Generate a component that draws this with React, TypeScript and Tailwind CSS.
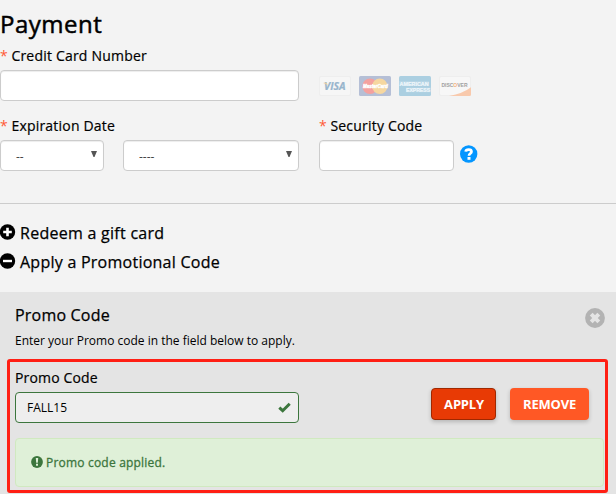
import { useState } from "react";

interface FieldLabelProps {
  htmlFor: string;
  children: string;
}

function FieldLabel({ htmlFor, children }: FieldLabelProps) {
  return (
    <label htmlFor={htmlFor} className="flex h-5 items-center gap-[3.5px] whitespace-nowrap text-[14px] leading-5 tracking-[0.2px] text-black">
      <span className="text-[#ff5a36]">*</span>
      <span className="[-webkit-text-stroke:0.2px_#000]">{children}</span>
    </label>
  );
}

function CircleIcon({ minus }: { minus?: boolean }) {
  return (
    <svg viewBox="0 0 16 16" className="mb-[2px] h-4 w-4 shrink-0" aria-hidden="true">
      <circle cx="7.5" cy="8" r="7.7" fill="#000" />
      <path d={minus ? "M3 6.8h9v2.4H3z" : "M6.2 3.7h2.6v3h3v2.6h-3v3H6.2v-3h-3V6.7h3z"} fill="#fff" />
    </svg>
  );
}

function CardLogos() {
  return (
    <div className="flex gap-2">
      <svg viewBox="0 0 32 20" className="h-5 w-8 overflow-visible" role="img" aria-label="Visa">
        <rect x="0.5" y="0.5" width="31" height="19" rx="1.5" fill="#f6f6f6" stroke="#eeeeee" />
        <text x="5" y="14" fontFamily="Open Sans, sans-serif" fontSize="10.4" fontWeight="700" fontStyle="italic" fill="#98b5cd" stroke="#98b5cd" strokeWidth="0.2">VISA</text>
        <path d="M4.5 6.8h3.2l1.2 3.2C7.8 8.4 6.4 7.6 4.5 7.3z" fill="#efd19c" />
      </svg>
      <svg viewBox="0 0 32 20" className="h-5 w-8 overflow-visible" role="img" aria-label="MasterCard">
        <rect width="32" height="20" rx="1.5" fill="#b5bfd6" />
        <circle cx="11" cy="10.3" r="7.7" fill="#f4a19f" />
        <circle cx="20.8" cy="10.3" r="7.7" fill="#f6d7a0" />
        <text x="4" y="12" fontFamily="Liberation Sans, sans-serif" fontSize="4.5" fontWeight="700" fontStyle="italic" fill="#fff" stroke="#fff" strokeWidth="0.4">MasterCard</text>
      </svg>
      <svg viewBox="0 0 32 20" className="h-5 w-8 overflow-visible" role="img" aria-label="American Express">
        <rect width="32" height="20" rx="1.5" fill="#abcfe1" />
        <path d="M0 5h30v5H0zM7 11.5h25v4.7H7z" fill="#b6d5e5" />
        <text x="0.6" y="9.6" fontFamily="Liberation Sans, sans-serif" fontSize="5.4" fontWeight="700" fill="#f0f7fb" stroke="#f0f7fb" strokeWidth="0.2">AMERICAN</text>
        <text x="7" y="16" fontFamily="Liberation Sans, sans-serif" fontSize="5.1" fontWeight="700" fill="#f0f7fb" stroke="#f0f7fb" strokeWidth="0.2">EXPRESS</text>
      </svg>
      <svg viewBox="0 0 32 20" className="h-5 w-8 overflow-visible" role="img" aria-label="Discover">
        <rect x="0.5" y="0.5" width="31" height="19" rx="1.5" fill="#f7f7f7" stroke="#eeeeee" />
        <path d="M32 11.2V18.5q0 1.5-1.5 1.5H10Q24 17.4 32 11.2z" fill="#f8c9ac" />
        <text x="2.4" y="11" fontFamily="Liberation Sans, sans-serif" fontSize="5" fontWeight="700" fill="#a0a0a0">
          DISC<tspan fill="#f6b27e">O</tspan>VER
        </text>
      </svg>
    </div>
  );
}

interface DateSelectProps {
  id: string;
  placeholder: string;
  className: string;
}

function DateSelect({ id, placeholder, className }: DateSelectProps) {
  return (
    <button
      id={id}
      type="button"
      className={`${className} flex h-[31px] items-center justify-between rounded-[4px] border border-[#ccc] bg-white pr-[6px] pl-[15px] text-[12px] text-[#444] shadow-[inset_0_1px_1px_rgba(0,0,0,0.075)]`}
    >
      <span className="pt-[3px]">{placeholder}</span>
      <svg viewBox="0 0 6 6" className="mb-[3px] h-[6px] w-[6px]" aria-hidden="true">
        <path d="M0 0h6L3.5 6h-1z" fill="#555" />
      </svg>
    </button>
  );
}

export default function App() {
  const [cardNumber, setCardNumber] = useState("");
  const [securityCode, setSecurityCode] = useState("");
  const [promoCode, setPromoCode] = useState("FALL15");

  return (
    <div className="flex h-[494px] w-[616px] flex-col overflow-hidden bg-[#f3f3f3] font-['Open_Sans',sans-serif] text-black">
      <h1 className="mt-[8px] h-8 text-[24px] leading-8 tracking-[0.5px] [-webkit-text-stroke:0.5px_#000]">Payment</h1>

      <div className="mt-[6px]">
        <FieldLabel htmlFor="cardNumber">Credit Card Number</FieldLabel>
      </div>
      <div className="mt-[4px] flex items-center gap-5">
        <input
          id="cardNumber"
          value={cardNumber}
          onChange={(e) => setCardNumber(e.target.value)}
          className="h-[31px] w-[299px] rounded-[4px] border border-[#ccc] bg-white px-3 text-[12px] shadow-[inset_0_1px_1px_rgba(0,0,0,0.075)]"
        />
        <CardLogos />
      </div>

      <div className="mt-[15px] flex">
        <div className="w-[319px]">
          <FieldLabel htmlFor="month">Expiration Date</FieldLabel>
          <div className="mt-[4px] flex gap-[19px]">
            <DateSelect id="month" placeholder="--" className="w-[104px]" />
            <DateSelect id="year" placeholder="----" className="w-[176px]" />
          </div>
        </div>
        <div>
          <FieldLabel htmlFor="securityCode">Security Code</FieldLabel>
          <div className="mt-[4px] flex items-center gap-[6px]">
            <input
              id="securityCode"
              value={securityCode}
              onChange={(e) => setSecurityCode(e.target.value)}
              className="h-[31px] w-[135px] rounded-[4px] border border-[#ccc] bg-white px-3 text-[12px] shadow-[inset_0_1px_1px_rgba(0,0,0,0.075)]"
            />
            <svg viewBox="0 0 18 18" className="mb-[3px] h-[18px] w-[18px]" role="img" aria-label="Help">
              <circle cx="8.7" cy="9" r="8.7" fill="#0496ff" />
              <path d="M5.7 6.6C5.9 4.8 7.1 4.6 8.7 4.6c1.7 0 2.8.7 2.8 2.1 0 1.9-2.5 1.8-2.5 4" fill="none" stroke="#fff" strokeWidth="2.7" />
              <path d="M7.5 12h3v2.8h-3z" fill="#fff" />
            </svg>
          </div>
        </div>
      </div>

      <hr className="mt-[32px] border-[#ccc]" />

      <div className="mt-[17px] flex h-[24px] items-center gap-1">
        <CircleIcon />
        <span className="text-[16px] leading-6 tracking-[0.27px] [-webkit-text-stroke:0.25px_#000]">Redeem a gift card</span>
      </div>
      <div className="mt-[5px] flex h-[24px] items-center gap-1">
        <CircleIcon minus />
        <span className="text-[16px] leading-6 tracking-[0.25px] [-webkit-text-stroke:0.25px_#000]">Apply a Promotional Code</span>
      </div>

      <section className="mt-[18px] flex-1 bg-[#e4e4e4]">
        <div className="flex justify-between pt-[11px] pr-[11.5px] pl-[15px]">
          <div>
            <h2 className="h-6 text-[16px] leading-6 tracking-[0.2px] [-webkit-text-stroke:0.25px_#000]">Promo Code</h2>
            <p className="mt-[4px] h-5 text-[12px] leading-5">Enter your Promo code in the field below to apply.</p>
          </div>
          <svg viewBox="0 0 20 20" className="mt-[5px] h-5 w-5" role="img" aria-label="Close">
            <circle cx="10" cy="10" r="9.9" fill="#b3b3b3" />
            <path d="M6.2 6.2l7.6 7.6M13.8 6.2l-7.6 7.6" stroke="#e4e4e4" strokeWidth="4" />
          </svg>
        </div>

        <div className="mt-[8px] ml-[7px] h-[134px] w-[601px] rounded-[3px] border-[3px] border-[#ff1f14] pl-[5px]">
          <div className="flex">
            <div>
              <label htmlFor="promoCode" className="mt-[6px] block h-5 text-[14px] leading-5 tracking-[0.15px] [-webkit-text-stroke:0.2px_#000]">
                Promo Code
              </label>
              <div className="mt-[4px] flex h-[31px] w-[284px] items-center justify-between rounded-[4px] border border-[#3c763d] bg-[#eee] pr-[7px] pl-[11px]">
                <input
                  id="promoCode"
                  value={promoCode}
                  onChange={(e) => setPromoCode(e.target.value)}
                  className="w-[200px] bg-transparent text-[12px] leading-5"
                />
                <svg viewBox="0 0 13 11" className="h-[11px] w-[13px]" aria-hidden="true">
                  <path d="M1.3 5.6l3.4 3.1L11.7 1.7" fill="none" stroke="#3c763d" strokeWidth="3" />
                </svg>
              </div>
            </div>
            <button type="button" className="mt-[26px] ml-[132px] h-8 w-[65px] rounded-[4px] border border-[#a02800] bg-[#e83a05] pt-px pl-px text-[13px] font-bold tracking-[-0.2px] text-white shadow-[0_2px_4px_rgba(0,0,0,0.2)]">
              APPLY
            </button>
            <button type="button" className="mt-[26px] ml-[14px] h-8 w-[79px] rounded-[4px] bg-[#ff5825] pt-px text-[13px] font-bold tracking-[-0.2px] text-white shadow-[0_2px_4px_rgba(0,0,0,0.2)]">
              REMOVE
            </button>
          </div>

          <div className="mt-[15px] flex h-[49px] w-[589px] items-center gap-[3px] rounded-[4px] border border-[#d0e9c0] bg-[#dff0d8] pl-[15px] text-[#3c763d]">
            <svg viewBox="0 0 12 12" className="mb-px h-3 w-3" aria-hidden="true">
              <circle cx="6" cy="6" r="5.9" fill="#3c763d" />
              <path d="M4.8 2h2.4l-.4 4.8H5.2zM5 7.8h2v1.9H5z" fill="#dff0d8" />
            </svg>
            <span className="text-[12px] leading-5 tracking-[0.2px] [-webkit-text-stroke:0.3px_#3c763d]">Promo code applied.</span>
          </div>
        </div>
      </section>
    </div>
  );
}
